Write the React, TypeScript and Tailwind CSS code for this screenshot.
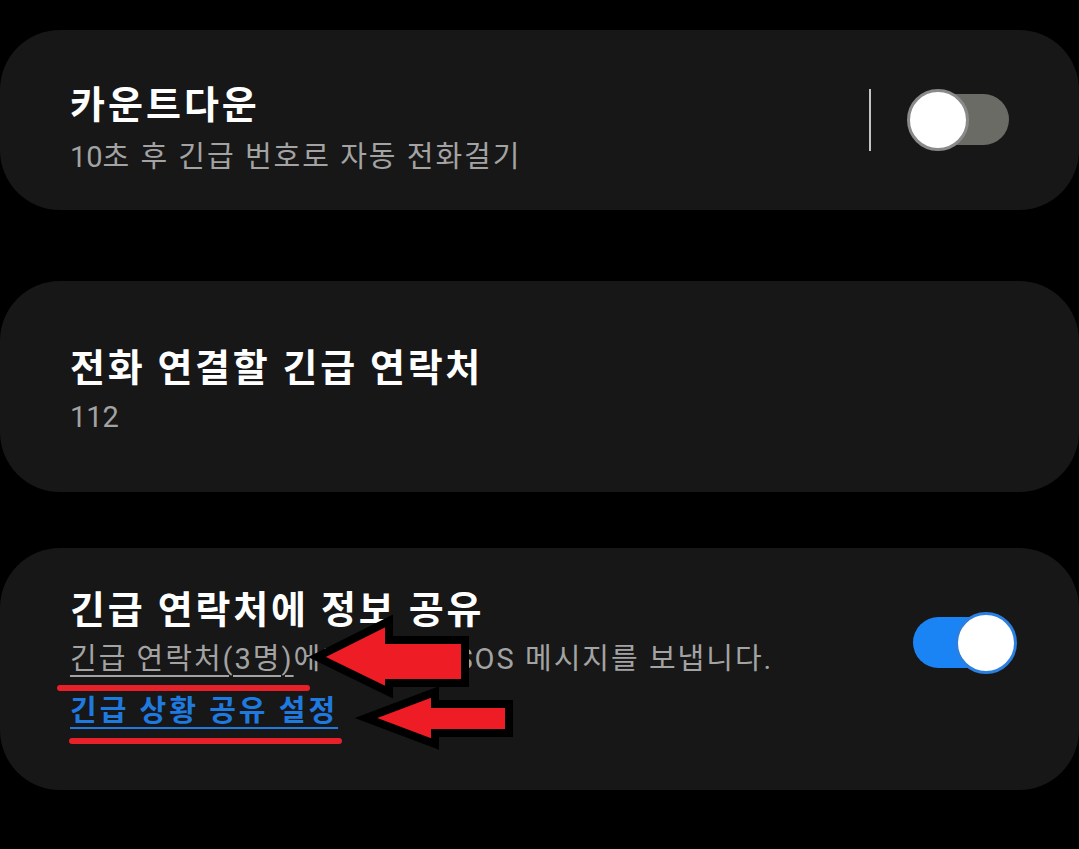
const font = { fontFamily: '"Roboto", "Noto Sans CJK KR", sans-serif' };

function Toggle({ on }: { on: boolean }) {
  return (
    <div className="relative h-[62px] w-[104px]">
      <div
        className={`absolute top-[5px] h-[51px] rounded-full ${
          on ? 'left-[2px] w-[96px] bg-[#1a84f5]' : 'left-[4px] w-[98px] bg-[#6b6b66]'
        }`}
      />
      <div
        className={`absolute top-0 h-[62px] w-[62px] rounded-full border-[3px] bg-white ${
          on ? 'left-[44px] border-[#2a7fe0]' : 'left-0 border-[#8a8a8a]'
        }`}
      />
    </div>
  );
}

function Arrows() {
  return (
    <svg className="pointer-events-none absolute inset-0" width="1079" height="849" viewBox="0 0 1079 849">
      <polygon
        points="317,657 389,621 389,640 465,640 465,683 389,683 389,692"
        fill="#ee1c25"
        stroke="#000"
        strokeWidth="8"
        strokeLinejoin="miter"
      />
      <polygon
        points="366,718 435,692 435,704 509,704 509,733 435,733 435,744"
        fill="#ee1c25"
        stroke="#000"
        strokeWidth="8"
        strokeLinejoin="miter"
      />
      <line x1="60" y1="688" x2="307" y2="688" stroke="#e8202a" strokeWidth="6" strokeLinecap="round" />
      <line x1="72" y1="741" x2="339" y2="741" stroke="#e8202a" strokeWidth="6" strokeLinecap="round" />
    </svg>
  );
}

export default function App() {
  return (
    <div className="relative h-[849px] w-[1079px] overflow-hidden bg-black" style={font}>
      <div className="pt-[30px]">
        <section className="flex h-[180px] items-center justify-between rounded-[60px] bg-[#171717] pl-[70px] pr-[68px]">
          <div className="pt-[18px]">
            <div className="text-[38px] font-semibold leading-[48px] tracking-[3px] text-white">카운트다운</div>
            <div className="mt-[8px] text-[29px] leading-[40px] tracking-[2px] text-[#a3a3a3]">
              <span className="tracking-normal">10</span>초 후 긴급 번호로 자동 전화걸기
            </div>
          </div>
          <div className="flex items-center gap-[36px]">
            <div className="h-[62px] w-[2px] bg-[#c4c4c4]" />
            <Toggle on={false} />
          </div>
        </section>

        <section className="mt-[71px] flex h-[211px] items-center rounded-[60px] bg-[#171717] pl-[70px]">
          <div className="pt-[7px]">
            <div className="text-[38px] font-semibold leading-[48px] tracking-[2.7px] text-white">전화 연결할 긴급 연락처</div>
            <div className="mt-[5px] text-[29px] leading-[40px] text-[#a3a3a3]">112</div>
          </div>
        </section>

        <section className="mt-[56px] flex h-[242px] items-start justify-between rounded-[60px] bg-[#171717] pl-[70px] pr-[64px] pt-[38px]">
          <div>
            <div className="text-[38px] font-semibold leading-[48px] tracking-[2.8px] text-white">긴급 연락처에 정보 공유</div>
            <div className="mt-[5px] text-[29px] leading-[40px] tracking-[2px] text-[#a3a3a3]">
              <span className="underline decoration-[2px] underline-offset-[6px]">긴급 연락처(3명)</span>에게 위치와 SOS 메시지를 보냅니다.
            </div>
            <div className="mt-[12px] text-[29px] font-bold leading-[40px] tracking-[3px] text-[#1f7ae0] underline decoration-[2px] underline-offset-[6px]">
              긴급 상황 공유 설정
            </div>
          </div>
          <div className="mt-[26px]">
            <Toggle on={true} />
          </div>
        </section>
      </div>
      <Arrows />
    </div>
  );
}
